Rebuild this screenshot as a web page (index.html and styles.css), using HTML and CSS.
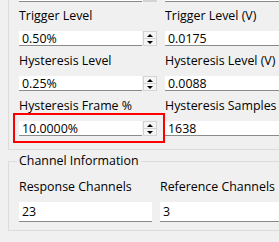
FILE: index.html
```html
<!DOCTYPE html>
<html>
<head>
<meta charset="utf-8">
<link rel="stylesheet" href="styles.css">
</head>
<body>
<div class="page">
  <div class="group g1">
    <div class="grid grid1 stub">
      <div class="field"><div class="edit"></div><div class="spin"></div></div>
      <div class="field"><div class="edit"></div></div>
    </div>
    <div class="grid grid1 rows">
      <div class="cell">
        <div class="label">Trigger Level</div>
        <div class="field"><div class="edit">0.50%</div><div class="spin"><span class="up"></span><span class="down"></span></div></div>
      </div>
      <div class="cell">
        <div class="label">Trigger Level (V)</div>
        <div class="field"><div class="edit">0.0175</div></div>
      </div>
      <div class="cell">
        <div class="label">Hysteresis Level</div>
        <div class="field"><div class="edit">0.25%</div><div class="spin"><span class="up"></span><span class="down"></span></div></div>
      </div>
      <div class="cell">
        <div class="label">Hysteresis Level (V)</div>
        <div class="field"><div class="edit">0.0088</div></div>
      </div>
      <div class="cell">
        <div class="label">Hysteresis Frame %</div>
        <div class="field highlight"><div class="edit">10.0000%</div><div class="spin"><span class="up"></span><span class="down"></span></div></div>
      </div>
      <div class="cell">
        <div class="label">Hysteresis Samples</div>
        <div class="field"><div class="edit">1638</div></div>
      </div>
    </div>
  </div>
  <fieldset class="g2">
    <legend>Channel Information</legend>
    <div class="grid grid2">
      <div class="cell">
        <div class="label">Response Channels</div>
        <div class="field tall"><div class="edit">23</div></div>
      </div>
      <div class="cell">
        <div class="label">Reference Channels</div>
        <div class="field tall"><div class="edit">3</div></div>
      </div>
    </div>
  </fieldset>
</div>
</body>
</html>
```

FILE: styles.css
```css
html, body {
  margin: 0;
  padding: 0;
  background: #f0f0f0;
  overflow: hidden;
}
body {
  width: 279px;
  height: 242px;
  font-family: "Open Sans", "Noto Sans", sans-serif;
  font-size: 12.4px;
  color: #000;
}
.page {
  width: 279px;
  overflow: hidden;
}
.group {
  width: 320px;
  margin-left: 8px;
  border-left: 1px solid #dcdcdc;
  border-bottom: 1px solid #dcdcdc;
  padding: 0 0 13px 10px;
}
.grid {
  display: grid;
  column-gap: 8px;
}
.grid1 {
  grid-template-columns: 138px 1fr;
}
.grid2 {
  grid-template-columns: 133px 1fr;
  margin-top: 10px;
}
.stub .field {
  height: 2px;
  overflow: hidden;
}
.stub .edit {
  height: 2px;
}
.rows {
  margin-top: 6px;
  row-gap: 7px;
}
.cell {
  display: flex;
  flex-direction: column;
  gap: 7px;
}
.label {
  height: 16px;
  line-height: 16px;
  white-space: nowrap;
}
.field {
  display: flex;
  height: 15px;
  position: relative;
}
.edit {
  flex: 1;
  box-sizing: border-box;
  background: #fff;
  border-bottom: 1px solid #8a8a8a;
  padding-left: 3px;
  line-height: 15px;
  white-space: nowrap;
}
.spin {
  width: 14px;
  margin-left: 1px;
  box-sizing: border-box;
  border: 1px solid #d4d4d4;
  background: #f5f5f5;
  display: flex;
  flex-direction: column;
}
.spin span {
  flex: 1;
  display: flex;
  align-items: center;
  justify-content: center;
}
.spin .up {
  border-bottom: 1px solid #d4d4d4;
}
.spin .up::before {
  content: "";
  border-left: 3px solid transparent;
  border-right: 3px solid transparent;
  border-bottom: 3px solid #000;
}
.spin .down::before {
  content: "";
  border-left: 3px solid transparent;
  border-right: 3px solid transparent;
  border-top: 3px solid #000;
}
.highlight::after {
  content: "";
  position: absolute;
  left: -6px;
  right: -8px;
  top: -8px;
  bottom: -7px;
  border: 2px solid #f00;
  pointer-events: none;
}
.g2 {
  width: 300px;
  margin: 3px 0 0 8px;
  padding: 0 0 8px 10px;
  border: 1px solid #dcdcdc;
  min-width: 0;
}
.g2 legend {
  padding: 0 2px;
  margin-left: -2px;
  line-height: 16px;
}
.field.tall {
  height: 20px;
}
.field.tall .edit {
  line-height: 20px;
}
```
